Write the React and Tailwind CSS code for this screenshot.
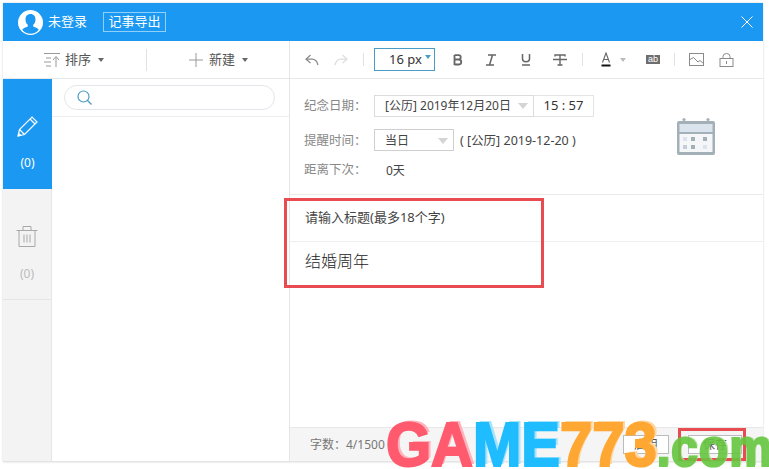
import React from 'react';

const Caret = ({ className = 'border-t-[#666]' }) => (
  <span className={`inline-block w-0 h-0 border-x-[3.5px] border-x-transparent border-t-[4px] ${className}`} />
);

const BigCaret = () => (
  <span className="inline-block w-0 h-0 border-x-[5px] border-x-transparent border-t-[6px] border-t-[#d4d4d4]" />
);

const Divider = ({ className = '' }) => <span className={`w-px h-[13px] bg-[#e2e2e2] ${className}`} />;

// toolbar icons
const Undo = ({ color = '#888', flip = false }) => (
  <svg width="14" height="12" viewBox="0 0 14 12" fill="none" stroke={color} strokeWidth="1.2" className={flip ? '-scale-x-100' : ''}>
    <path d="M5.500 1 1 5.200 5.500 9" />
    <path d="M1 5.200h6c3 0 5 2 6 5.800" />
  </svg>
);

const ImageIcon = () => (
  <svg width="15" height="13" viewBox="0 0 15 13" fill="none" stroke="#8a8a8a" strokeWidth="1">
    <rect x="0.500" y="0.500" width="14" height="12" />
    <path d="M1 6.500 4.500 4.500 9 9l2-1.500 3.500 3" />
  </svg>
);

const LockIcon = () => (
  <svg width="15" height="14" viewBox="0 0 15 14" fill="none" stroke="#8a8a8a" strokeWidth="1">
    <rect x="1" y="5.500" width="13" height="8" />
    <path d="M4 5.500V3.500a3.500 3 0 0 1 7 0v2M7.500 8v3" />
  </svg>
);

const SortIcon = () => (
  <svg width="18" height="15" viewBox="0 0 18 15" fill="none" stroke="#999" strokeWidth="1">
    <path d="M1 1.500h16M3 6h5M1 10h7M3 14h5M13 5v10M10 8l3-3.500L16 8" />
  </svg>
);

const PlusIcon = () => (
  <svg width="14" height="14" viewBox="0 0 14 14" stroke="#999" strokeWidth="1">
    <path d="M7 0v14M0 7h14" />
  </svg>
);

const BoldIcon = () => (
  <svg width="16" height="12" viewBox="0 0 16 12" fill="none" stroke="#666" strokeWidth="1.800">
    <path d="M4.500 1v10M4.500 1.200h4c3 0 3 4.300 0 4.300h-4M4.500 5.700h4.500c3 0 3 4.800 0 4.800H4.500" />
  </svg>
);

const ItalicIcon = () => (
  <svg width="16" height="12" viewBox="0 0 16 12" fill="none" stroke="#666" strokeWidth="1.500">
    <path d="M5 1h8M3 11h8M9.500 1 6.500 11" />
  </svg>
);

const UnderlineIcon = () => (
  <svg width="16" height="13" viewBox="0 0 16 13" fill="none" stroke="#666" strokeWidth="1.500">
    <path d="M4.500 1v5c0 3.500 7 3.500 7 0V1M4 12h8" />
  </svg>
);

const StrikeIcon = () => (
  <svg width="16" height="12" viewBox="0 0 16 12" fill="none" stroke="#666" strokeWidth="1.400">
    <path d="M3 2.500V1h10v1.500M8 1v10M5.500 11h5M1 5.500h14" />
  </svg>
);

const FontColorIcon = () => (
  <svg width="16" height="15" viewBox="0 0 16 15" fill="none">
    <path d="M4.500 10.500 8 1l3.500 9.500M5.700 7.500h4.600" stroke="#666" strokeWidth="1.100" />
    <path d="M3.500 13.500h9" stroke="#111" strokeWidth="2" />
  </svg>
);

const HighlightIcon = () => (
  <span className="w-[14px] h-[9px] bg-[#6e6e6e] text-white text-[9px] leading-[9px] text-center font-['Liberation_Sans',sans-serif]">ab</span>
);

const CalendarIcon = () => (
  <svg width="38" height="38" viewBox="0 0 38 38">
    <circle cx="7" cy="2.500" r="1.600" fill="#a4b0b8" />
    <circle cx="31" cy="2.500" r="1.600" fill="#a4b0b8" />
    <rect x="0" y="4" width="38" height="34" rx="2" fill="#a4b0b8" />
    <rect x="2.500" y="7" width="33" height="8" fill="#dbe4ec" />
    <rect x="2.500" y="17" width="33" height="18" fill="#f4f6f8" />
    <g fill="#a4b0b8">
      <rect x="14" y="20" width="4" height="4" />
      <rect x="26" y="20" width="4" height="4" />
      <rect x="14" y="28" width="4" height="4" />
    </g>
    <g fill="#dbe4ec">
      <rect x="6" y="20" width="4" height="4" />
      <rect x="26" y="28" width="4" height="4" />
    </g>
    <rect x="6" y="28" width="4" height="4" fill="#c4ced6" />
  </svg>
);

const AvatarIcon = () => (
  <svg width="25" height="25" viewBox="0 0 25 25">
    <circle cx="12.500" cy="12.500" r="12.500" fill="#fff" />
    <path d="M12.500 4c3.200 0 5 2.400 5 5.400 0 2.400-1 4.300-2.300 5.400v1.700c2.400.8 4.500 1.700 5.600 3.200a10.600 10.600 0 0 1-16.600 0c1.100-1.500 3.200-2.400 5.600-3.200v-1.700C8.500 13.700 7.500 11.800 7.500 9.400 7.500 6.400 9.300 4 12.500 4z" fill="#1a98f2" />
  </svg>
);

const PencilIcon = () => (
  <svg width="22" height="22" viewBox="0 0 22 22" fill="none" stroke="#fff" strokeWidth="1.200">
    <path d="M1 21 2.500 14.500 15 2l5 5L7.500 19.500z" />
    <path d="M13 4l5 5M2.500 14.500l5 5M1 21l2.700-.7-2-2" />
  </svg>
);

const TrashIcon = () => (
  <svg width="22" height="22" viewBox="0 0 22 22" fill="none" stroke="#a8a8a8" strokeWidth="1">
    <path d="M0.500 5.500h21M7 5.500v-4h8v4M3 5.500v16h16v-16M8 9.500v8M11 9.500v8M14 9.500v8" />
  </svg>
);

const Watermark = () => (
  <div className="absolute left-[386px] top-[424px] h-[44px] flex items-baseline origin-bottom scale-y-[1.1] font-['Liberation_Sans',sans-serif] font-bold leading-[44px] text-[58px]">
    <span className="text-[#ff5a6e] [-webkit-text-stroke:2px_#ff5a6e] [text-shadow:3px_-2px_0_#ffb3bc]">GA</span>
    <span className="text-[#1fbcff] [-webkit-text-stroke:2px_#1fbcff] [text-shadow:3px_-2px_0_#a5e3fb]">ME</span>
    <span className="text-[#ffa733] [-webkit-text-stroke:2px_#ffa733] [text-shadow:3px_-2px_0_#fdd7a3]">773</span>
    <span className="text-[#66c63f] text-[48px] tracking-[1px] opacity-90 [-webkit-text-stroke:2px_#66c63f] [text-shadow:2px_-1px_0_#b4df9f]">.com</span>
  </div>
);

export default function App() {
  return (
    <div className="relative w-[769px] h-[469px] overflow-hidden bg-white pt-[3px] pl-[3px] font-['Noto_Sans','Noto_Sans_CJK_SC',sans-serif] text-[12px] text-[#333]">
      <div className="w-[760px] h-[459px] flex flex-col border-b border-[#e4e4e4] shadow-[0_0_2px_#d0d0d0]">
        {/* title bar */}
        <div className="h-[38px] shrink-0 bg-[#1a98f2] flex items-center pl-[15px] pr-[10px] text-white">
          <AvatarIcon />
          <span className="ml-[5px] text-[13px]">未登录</span>
          <span className="ml-[16px] w-[63px] h-[20px] border border-[#8fd0fb] flex items-center justify-center text-[13px]">记事导出</span>
          <svg className="ml-auto" width="12" height="12" viewBox="0 0 12 12" stroke="#fff" strokeWidth="1">
            <path d="M0.500 0.500l11 11M11.500 0.500l-11 11" />
          </svg>
        </div>

        <div className="flex-1 flex min-h-0">
          {/* left column */}
          <div className="w-[287px] shrink-0 flex flex-col border-r border-[#e6e6e6]">
            <div className="h-[38px] shrink-0 flex items-center pl-[40px] border-b border-[#e8e8e8] text-[13px] text-[#555]">
              <SortIcon />
              <span className="ml-[4px]">排序</span>
              <Caret className="ml-[7px] border-t-[#666]" />
              <Divider className="ml-[42px] !h-[22px]" />
              <span className="ml-[42px] flex"><PlusIcon /></span>
              <span className="ml-[6px]">新建</span>
              <Caret className="ml-[7px] border-t-[#666]" />
            </div>
            <div className="flex-1 flex min-h-0">
              <div className="w-[49px] shrink-0 bg-[#f3f3f3] border-r border-[#e6e6e6] flex flex-col">
                <div className="h-[110px] -mr-px bg-[#1a98f2] flex flex-col items-center pt-[36px] text-white">
                  <PencilIcon />
                  <span className="mt-[18px] text-[12px] leading-[16px]">(0)</span>
                </div>
                <div className="h-[111px] border-b border-[#e6e6e6] flex flex-col items-center pt-[36px] text-[#bbb]">
                  <TrashIcon />
                  <span className="mt-[19px] text-[12px] leading-[16px]">(0)</span>
                </div>
              </div>
              <div className="flex-1">
                <div className="h-[38px] border-b border-[#eee] pl-[12px] pt-[6px]">
                  <div className="w-[211px] h-[25px] rounded-full border border-[#e2e6ea] flex items-center pl-[12px]">
                    <svg width="15" height="15" viewBox="0 0 15 15" fill="none" stroke="#4a9cc5" strokeWidth="1.200">
                      <circle cx="6.500" cy="6.500" r="5.500" />
                      <path d="M10.500 10.500l4 4" />
                    </svg>
                  </div>
                </div>
              </div>
            </div>
          </div>

          {/* right column */}
          <div className="flex-1 flex flex-col min-w-0">
            <div className="h-[38px] shrink-0 flex items-center border-b border-[#e8e8e8] pl-[15px]">
              <Undo />
              <span className="ml-[15px] flex"><Undo color="#ddd" flip /></span>
              <Divider className="ml-[15px]" />
              <div className="ml-[10px] w-[61px] h-[23px] border border-[#4a9cc5] flex items-center pl-[14px] text-[13px] text-[#333] relative">
                16 px
                <span className="absolute right-[3px] top-[6px] w-0 h-0 border-x-[3px] border-x-transparent border-t-[4px] border-t-[#4a9cc5]" />
              </div>
              <span className="ml-[15px] flex"><BoldIcon /></span>
              <span className="ml-[17px] flex"><ItalicIcon /></span>
              <span className="ml-[19px] flex"><UnderlineIcon /></span>
              <span className="ml-[18px] flex"><StrikeIcon /></span>
              <Divider className="ml-[14px]" />
              <span className="ml-[15px] flex"><FontColorIcon /></span>
              <Caret className="ml-[6px] border-t-[#bbb]" />
              <span className="ml-[20px] flex"><HighlightIcon /></span>
              <Divider className="ml-[14px]" />
              <span className="ml-[14px] flex"><ImageIcon /></span>
              <span className="ml-[15px] flex"><LockIcon /></span>
            </div>

            {/* date form */}
            <div className="h-[116px] shrink-0 border-b border-[#eaeaea] flex pl-[14px] pt-[16px]">
              <div className="flex flex-col">
                <div className="flex items-center h-[22px]">
                  <span className="w-[70px] text-[12.500px] text-[#888]">纪念日期：</span>
                  <div className="w-[160px] h-[22px] border border-[#dcdcdc] flex items-center pl-[10px] text-[#444]">
                    [公历] 2019年12月20日
                    <span className="ml-auto mr-[5px] flex"><BigCaret /></span>
                  </div>
                  <div className="w-[60px] h-[22px] border border-l-0 border-[#e4e4e4] flex items-center justify-center text-[#333] text-[13px]">15 : 57</div>
                </div>
                <div className="flex items-center h-[22px] mt-[12px] pt-[2px]">
                  <span className="w-[70px] text-[12.500px] text-[#888]">提醒时间：</span>
                  <div className="w-[80px] h-[22px] -mt-[2px] border border-[#cfcfcf] flex items-center pl-[10px] pt-[2px] text-[#444]">
                    当日
                    <span className="ml-auto mr-[5px] flex"><BigCaret /></span>
                  </div>
                  <span className="ml-[6px] text-[12.500px] text-[#444]">( [公历] 2019-12-20 )</span>
                </div>
                <div className="flex items-center h-[20px] mt-[9px] pt-[1px]">
                  <span className="w-[82px] text-[12.500px] text-[#888]">距离下次：</span>
                  <span className="text-[#444]">0天</span>
                </div>
              </div>
              <div className="ml-auto mr-[48px] mt-[22px]">
                <CalendarIcon />
              </div>
            </div>

            <div className="h-[47px] shrink-0 border-b border-[#eee] pl-[15px] flex items-center text-[13px] text-[#444]">请输入标题(最多18个字)</div>
            <div className="flex-1 pl-[15px] pt-[7px] text-[16px] font-light text-[#222]">结婚周年</div>
            <div className="h-[34px] shrink-0 bg-[#f5f5f5] border-t border-[#e8e8e8] pl-[20px] flex items-center text-[#777]">
              字数：4/1500
              <div className="ml-auto mr-[21px] flex items-center text-[#555]">
                <span className="w-[46px] h-[19px] bg-white border border-[#bbb] flex items-center justify-center">启用</span>
                <span className="ml-[19px] w-[54px] h-[19px] bg-white border border-[#bbb] flex items-center justify-center">保存</span>
              </div>
            </div>
          </div>
        </div>
      </div>

      <div className="absolute left-[284px] top-[198px] w-[260px] h-[90px] border-[3px] border-[#e84c50]" />
      <div className="absolute left-[678px] top-[428px] w-[68px] h-[33px] border-[3px] border-[#e84c50]" />
      <Watermark />
    </div>
  );
}
